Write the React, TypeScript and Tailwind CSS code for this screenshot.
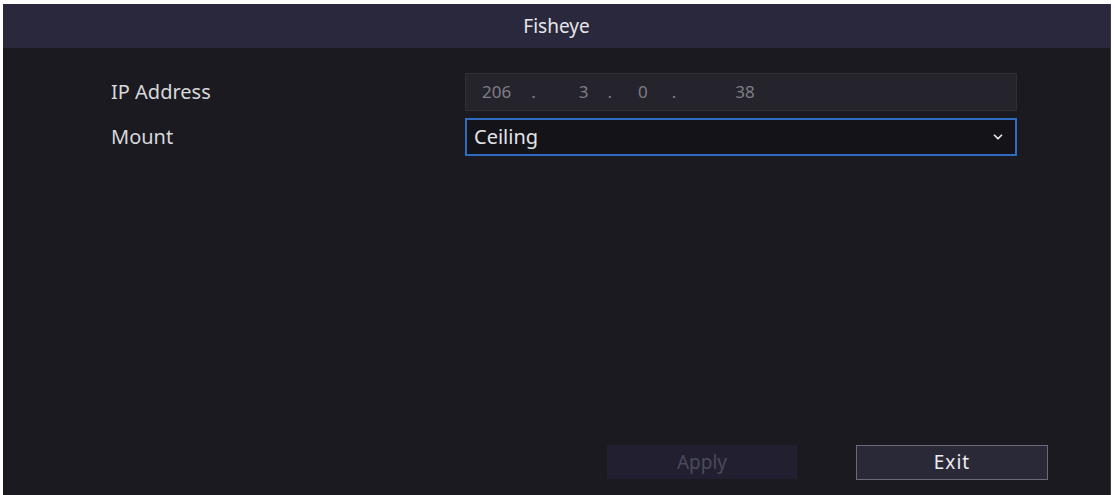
import { ChevronDown } from "lucide-react";

export default function App() {
  return (
    <div className="w-[1115px] h-[495px] bg-white pt-[4px] pl-[3px] pr-[4px] overflow-hidden" style={{ fontFamily: '"Noto Sans", "Open Sans", sans-serif' }}>
      <div className="h-full flex flex-col bg-[#1b1a21] border-r border-[#3a3a40]">
        {/* title bar */}
        <div className="h-[44px] shrink-0 bg-[#29283d] flex items-center justify-center text-[19px] text-[#e6e6ea]">
          Fisheye
        </div>

        {/* form */}
        <div className="flex-1 flex flex-col pt-[25px] pl-[108px]">
          <div className="flex items-center h-[38px]">
            <span className="w-[354px] text-[20px] text-[#d8d8dc]">IP Address</span>
            <div className="w-[552px] h-[38px] bg-[#25242c] border border-[#2f2e36] flex items-center pl-[16px] text-[17px] text-[#7e7e86]">
              <span>206</span>
              <span className="ml-[20px]">.</span>
              <span className="ml-[43px]">3</span>
              <span className="ml-[19px]">.</span>
              <span className="ml-[26px]">0</span>
              <span className="ml-[24px]">.</span>
              <span className="ml-[59px]">38</span>
            </div>
          </div>
          <div className="flex items-center h-[38px] mt-[7px]">
            <span className="w-[354px] text-[20px] text-[#d8d8dc]">Mount</span>
            <div className="w-[552px] h-[38px] bg-[#131318] border-2 border-[#2e6cc2] flex items-center justify-between pl-[7px] pr-[10px] text-[20px] text-[#e4e4e8]">
              <span>Ceiling</span>
              <ChevronDown className="w-[14px] h-[14px] text-[#e8e8ec]" strokeWidth={3} />
            </div>
          </div>
        </div>

        {/* buttons */}
        <div className="flex justify-start pl-[604px] gap-[59px] pb-[15px]">
          <button className="w-[190px] h-[34px] bg-[#211f30] text-[19px] text-[#4b4a5a]">Apply</button>
          <button className="w-[192px] h-[35px] bg-[#2a2938] border border-[#6c6b78] text-[19px] tracking-[1px] text-[#ececf0]">Exit</button>
        </div>
      </div>
    </div>
  );
}
